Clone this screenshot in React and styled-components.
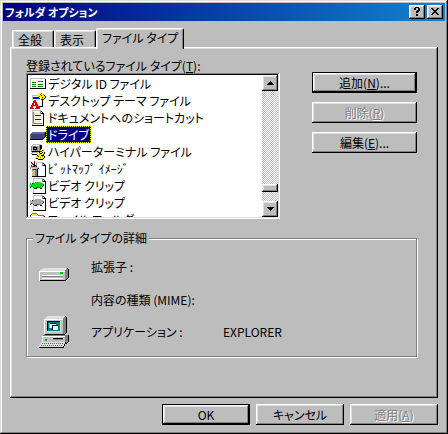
import React, { useState } from 'react';
import styled, { createGlobalStyle, css } from 'styled-components';

const palette = {
  k: '#000000',
  w: '#ffffff',
  g: '#808080',
  s: '#bdbdbd',
  r: '#d80000',
  n: '#008000',
  l: '#00d820',
  y: '#ffff00',
  o: '#808000',
  b: '#0000ff',
  d: '#000080',
  m: '#404078',
  v: '#686898',
  t: '#008080',
  f: '#f8e860',
};

const sprites = {
  card: [
    '................',
    '................',
    'ssssssssssssssss',
    'swwwwwwwwwwwwwwk',
    'swwwwwwwwwwwwwwk',
    'swwwwwwwnnnnnwwk',
    'swnnnnwwwwwwwwwk',
    'swwwwwwwwwwwwwwk',
    'swnnnnwwnnnnnwwk',
    'swwwwwwwwwwwwwwk',
    'swnnnnwwnnnnnwwk',
    'swwwwwwwwwwwwwwk',
    'kkkkkkkkkkkkkkkk',
    '................',
    '................',
    '................',
  ],
  theme: [
    '.........yyo....',
    '........yyryyo..',
    '..ssssssyyybyyk.',
    '..swwwwwyryyyyyk',
    '..sbbbbbbyyykyyk',
    '..sbbbbbbkyyyyk.',
    '..swwwwwwwwkkk..',
    '....rrwwwwwwk...',
    '...rrrwwwwwwk...',
    '...rrrrwwwwwk...',
    '..rr.rrwwwwwk...',
    '..rr.rrrwwwwk...',
    '.rrrrrrrwwwwk...',
    '.rr...rrrkkkk...',
    'rrr...rrrr......',
    'rrrr.rrrrr......',
  ],
  document: [
    '..sssssssss.....',
    '..swwwwwwwgk....',
    '..sgwwwwwwgwk...',
    '..sgyyyyywgkkk..',
    '..sgwwwwwwwwwk..',
    '..sgwbbbbbbwwk..',
    '..sgwwwwwwwwwk..',
    '..sgwyyyyyywwk..',
    '..sgwwwwwwwwwk..',
    '..sgwbbbbbbwwk..',
    '..sgwwwwwwwwwk..',
    '..sgwyyyyywwwk..',
    '..sgwwwwwwwwwk..',
    '..sgggggggggwk..',
    '..swwwwwwwwwwk..',
    '..kkkkkkkkkkkk..',
  ],
  disk: [
    '................',
    '................',
    '................',
    '................',
    '................',
    '..vvvvvvvvvvvvvk',
    '.vvvvvvvvvvvvvmk',
    'vmmmmmmmmmmmmmmk',
    'vmmmmmmmmmmmmmmk',
    'vmmmmmmmmmmmmmmk',
    'vmmmmmmmmmmmmmk.',
    'vmmmmmmmmmmmmk..',
    'kkkkkkkkkkkkk...',
    '................',
    '................',
    '................',
  ],
  terminal: [
    '...ssssssss.....',
    '..swwwwwwgkk....',
    '.gsgggggsgkk....',
    '.gskkkkgsgkk....',
    '.gsktlkgsgkk....',
    '.gskkkkgsgkyy...',
    '.gsgggggsgyyko..',
    '.gkkkkkkkkkoyy..',
    '..gsssssskyykyk.',
    '.gswwwwsyykkyyk.',
    '..kkkkkyyoyyyk..',
    '.......kyyykkk..',
    '......yykyyyoyk.',
    '.....yywyyoyyyk.',
    '......kkyyyyyk..',
    '........kkkkk...',
  ],
  paint: [
    '....r...........',
    '.k..r..ssssss...',
    '.gk.k.gwwwwwgk..',
    '..gkk.gwwwwwgwk.',
    '.r.gkkgwwwwwgkkk',
    '.rrkkgkwwwwwwwwk',
    'ssssssssswwwwwwk',
    'gwwssssgkwwwwwwk',
    '.wrrbbgkwwwwwwwk',
    '.wsssggkwwwwwwwk',
    '.wsssggkwwwwwwwk',
    '.wyssggkwwwwwwwk',
    '.wsssggkwwwwwwwk',
    '.wsssggkwwwwwwwk',
    '.wsssggkwwwwwwwk',
    '..kkkkkkkkkkkkkk',
  ],
  video: [
    '...ssssssssss...',
    '...swwwwwwwwgk..',
    '...swwwwwwwwgwk.',
    '...swwwwwwwwgkkk',
    '...swccccccwwwwk',
    'c.kccccccccccwwk',
    'cccccccccccccxwk',
    'ccccccccccccckwk',
    'cxccccccccccxwwk',
    'x..xccxxxxccwwwk',
    '...sxkkwwwkkwwwk',
    '...swwwwwwwwwwwk',
    '...swwwwwwwwwwwk',
    '...swwwwwwwwwwwk',
    '...swwwwwwwwwwwk',
    '...kkkkkkkkkkkkk',
  ],
  folder: [
    '................',
    '..ooooo.........',
    '.offfffo........',
    'offfffffoooooo..',
    'owwwwwwwwwwwwok.',
    'owffffffffffffk.',
    'owffffffffffffk.',
    'owffffffffffffk.',
    'owffffffffffffk.',
    'owffffffffffffk.',
    'owffffffffffffk.',
    'owffffffffffffk.',
    'ooooooooooooook.',
    '.kkkkkkkkkkkkkk.',
  ],
};

const Sprite = ({ name, colors = {} }) => (
  <SmallIcon viewBox="0 0 16 16" aria-hidden="true">
    {sprites[name].map((line, y) =>
      [...line].map((c, x) =>
        c === '.' ? null : (
          <rect key={`${x}-${y}`} x={x} y={y} width="1" height="1" fill={colors[c] || palette[c]} />
        )
      )
    )}
  </SmallIcon>
);

const green = { c: '#00d820', x: '#008000' };
const silver = { c: '#a8a8a8', x: '#606060' };

const fileTypes = [
  { id: 1, icon: 'card', label: 'デジタル ID ファイル' },
  { id: 2, icon: 'theme', label: 'デスクトップ テーマ ファイル' },
  { id: 3, icon: 'document', label: 'ドキュメントへのショートカット' },
  { id: 4, icon: 'disk', label: 'ドライブ' },
  { id: 5, icon: 'terminal', label: 'ハイパーターミナル ファイル' },
  { id: 6, icon: 'paint', label: 'ﾋﾞｯﾄﾏｯﾌﾟ ｲﾒｰｼﾞ' },
  { id: 7, icon: 'video', colors: green, label: 'ビデオ クリップ' },
  { id: 8, icon: 'video', colors: silver, label: 'ビデオ クリップ' },
  { id: 9, icon: 'folder', label: 'ファイル フォルダ' },
];

const DriveIcon = () => (
  <LargeIcon viewBox="0 0 32 32" aria-hidden="true">
    <path d="M4 9h25v1h1v8h-1v1h-1v1h-1v1h-1v1H0V12h1v-1h1v-1h2z" fill="#808080" />
    <path d="M4 9h24v1h-1v1h-1v1H1v-1h1v-1h2z" fill="#dfdfdf" />
    <path d="M0 12h26v10H0z" fill="#c0c0c0" />
    <path d="M0 12h26v1H1v9H0z" fill="#fff" />
    <path d="M3 16h21v1H3zM3 19h21v1H3z" fill="#fff" />
    <path d="M3 17h21v1H3z" fill="#808080" />
    <path d="M21 13h3v2h-3z" fill="#00c000" />
    <path d="M1 22h26v-1h1v-1h1v-1h1V10h-1V9h-1v1h1v9h-1v1h-1v1H1z" fill="#000" />
  </LargeIcon>
);

const ComputerIcon = () => (
  <LargeIcon $row={3} viewBox="0 0 32 32" aria-hidden="true">
    <path d="M8 0h19v1h1v16h-1v1h-1v1H5V3h1V2h1V1h1z" fill="#808080" />
    <path d="M8 0h18v1h-1v1h-1v1H6V2h1V1h1z" fill="#dfdfdf" />
    <path d="M5 3h19v15H5z" fill="#c0c0c0" />
    <path d="M5 3h19v1H6v14H5z" fill="#fff" />
    <path d="M8 5h14v11H8z" fill="#000" />
    <path d="M9 6h12v9H9z" fill="#008080" />
    <path d="M21 5h1v11H8v-1h13z" fill="#dfdfdf" />
    <path d="M10 7h6v5h-6z" fill="#00ffff" />
    <path d="M11 7h6v5h-6z" fill="#fff" />
    <path d="M11 7h6v1h-6z" fill="#000080" />
    <path d="M13 9h6v5h-6z" fill="#000080" />
    <path d="M14 10h5v4h-5z" fill="#fff" />
    <path d="M6 18h19v1h1v-1h1v-1h1V1h-1V0h-1v1h1v16h-1v1h-1v1H6z" fill="#000" />
    <path d="M4 19h25v1h1v6h-1v1h-1v1H3v-8h1z" fill="#808080" />
    <path d="M3 20h23v7H3z" fill="#c0c0c0" />
    <path d="M3 20h23v1H4v6H3z" fill="#fff" />
    <path d="M6 23h2v2H6z" fill="#00c000" />
    <path d="M14 22h10v1H14z" fill="#000" />
    <path d="M14 23h10v1H14z" fill="#808080" />
    <path d="M30 19v7h-1v1h-1v1H27v-1h1v-1h1v-7z" fill="#000" />
    <path d="M2 26h24v2h-1v2h-1v1H0v-2h1v-2h1z" fill="#dfdfdf" />
    <path d="M3 27.5h22M2 29.5h22" stroke="#606060" strokeWidth="1" strokeDasharray="1 1" />
    <path d="M0 31h24v-1h1v-2h1v-2h1v2h-1v2h-1v2H0z" fill="#000" />
  </LargeIcon>
);

const HelpGlyph = () => (
  <Glyph viewBox="0 0 8 9" aria-hidden="true">
    <path d="M2 0h4v1h1v3H6v1H5v1H3V4h1V3h1V1H3v2H1V1h1zM3 7h2v2H3z" />
  </Glyph>
);

const CloseGlyph = () => (
  <Glyph viewBox="0 0 8 9" aria-hidden="true">
    <path d="M0 1h2v1h1v1h2V2h1V1h2v1H7v1H6v1H5v1h1v1h1v1h1v1H6V7H5V6H3v1H2v1H0V7h1V6h1V5h1V4H2V3H1V2H0z" />
  </Glyph>
);

const tabs = ['全般', '表示', 'ファイル タイプ'];

const App = () => {
  const [tab, setTab] = useState(2);
  const [selected, setSelected] = useState(4);

  return (
    <Dialog>
      <GlobalStyle />
      <TitleBar>
        <Title>フォルダ オプション</Title>
        <CaptionButton aria-label="ヘルプ"><HelpGlyph /></CaptionButton>
        <CaptionButton aria-label="閉じる"><CloseGlyph /></CaptionButton>
      </TitleBar>
      <Body>
        <TabList role="tablist">
          {tabs.map((name, i) => (
            <Tab key={name} role="tab" aria-selected={tab === i} $active={tab === i} onClick={() => setTab(i)}>
              {name}
            </Tab>
          ))}
        </TabList>
        <Panel role="tabpanel">
          <Columns>
            <ListColumn>
              <ListLabel id="types-label">登録されているファイル タイプ(<u>T</u>):</ListLabel>
              <ListBox>
                <Items role="listbox" aria-labelledby="types-label" tabIndex={0}>
                  {fileTypes.map(({ id, icon, colors, label }) => (
                    <Item key={id} role="option" aria-selected={selected === id} onClick={() => setSelected(id)}>
                      <Sprite name={icon} colors={colors} />
                      <ItemText $selected={selected === id}>{label}</ItemText>
                    </Item>
                  ))}
                </Items>
                <ScrollBar>
                  <ScrollButton aria-label="上へ">
                    <Arrow viewBox="0 0 7 4"><path d="M3 0h1v1h1v1h1v1h1v1H0V3h1V2h1V1h1z" /></Arrow>
                  </ScrollButton>
                  <Track><Thumb /></Track>
                  <ScrollButton aria-label="下へ">
                    <Arrow viewBox="0 0 7 4"><path d="M0 0h7v1H6v1H5v1H4v1H3V3H2V2H1V1H0z" /></Arrow>
                  </ScrollButton>
                </ScrollBar>
              </ListBox>
            </ListColumn>
            <ButtonColumn>
              <Button $primary>追加(<u>N</u>)...</Button>
              <Button disabled>削除(<u>R</u>)</Button>
              <Button>編集(<u>E</u>)...</Button>
            </ButtonColumn>
          </Columns>
          <Group>
            <Legend>ファイル タイプの詳細</Legend>
            <Details>
              <DriveIcon />
              <Term>拡張子 :</Term>
              <Term $row={2}>内容の種類 (MIME):</Term>
              <ComputerIcon />
              <Term $row={3}>アプリケーション :</Term>
              <Value $row={3}>EXPLORER</Value>
            </Details>
          </Group>
        </Panel>
        <Footer>
          <Button $primary>OK</Button>
          <Button>キャンセル</Button>
          <Button disabled>適用(<u>A</u>)</Button>
        </Footer>
      </Body>
    </Dialog>
  );
};

const face = '#bdbdbd';

const GlobalStyle = createGlobalStyle`
  * {
    box-sizing: border-box;
  }

  body {
    margin: 0;
    background: ${face};
  }

  body, button {
    font-family: "Noto Sans CJK JP", sans-serif;
    font-size: 12px;
    line-height: 16px;
    font-feature-settings: "palt";
    color: #000;
  }

  u {
    text-underline-offset: 1px;
  }
`;

const raised = css`
  box-shadow: inset -1px -1px #000, inset 1px 1px #fff, inset -2px -2px #808080, inset 2px 2px #dfdfdf;
`;

const Dialog = styled.div`
  padding: 3px;
  background: ${face};
  box-shadow: inset -1px -1px #000, inset 1px 1px #dfdfdf, inset -2px -2px #808080, inset 2px 2px #fff;
`;

const TitleBar = styled.header`
  display: flex;
  align-items: center;
  height: 18px;
  padding: 0 2px;
  background: linear-gradient(to right, #000080, #1084d0);
`;

const Title = styled.h1`
  flex: 1;
  margin: 0;
  font-size: 11px;
  font-weight: 700;
  color: #fff;
`;

const CaptionButton = styled.button`
  display: flex;
  align-items: center;
  justify-content: center;
  width: 16px;
  height: 14px;
  margin-left: 2px;
  padding: 0 1px 1px 0;
  border: 0;
  background: ${face};
  ${raised}
`;

const Glyph = styled.svg`
  width: 8px;
  height: 9px;
  shape-rendering: crispEdges;
`;

const Body = styled.main`
  padding: 7px 7px 6px;
`;

const TabList = styled.div`
  display: flex;
  align-items: flex-end;
  padding-left: 2px;
`;

const Tab = styled.button`
  min-width: 42px;
  height: 17px;
  padding: 0 5px;
  border: 1px solid #fff;
  border-right-color: #000;
  border-bottom: 0;
  border-radius: 2px 2px 0 0;
  background: ${face};
  box-shadow: inset -1px 0 #808080, inset 1px 1px #dfdfdf;
  line-height: 15px;
  text-align: left;

  ${({ $active }) => $active && css`
    position: relative;
    height: 21px;
    margin-bottom: -2px;
    line-height: 16px;
    padding-bottom: 3px;
  `}
`;

const Panel = styled.section`
  padding: 11px 21px 41px 16px;
  ${raised}
`;

const Columns = styled.div`
  display: flex;
  gap: 32px;
`;

const ListColumn = styled.div`
  flex: 1;
  min-width: 0;
`;

const ListLabel = styled.div`
  line-height: 15px;
`;

const ListBox = styled.div`
  display: flex;
  height: 146px;
  padding: 2px;
  background: #fff;
  box-shadow: inset -1px -1px #fff, inset 1px 1px #808080, inset -2px -2px #dfdfdf, inset 2px 2px #000;
`;

const Items = styled.ul`
  flex: 1;
  margin: 0;
  padding: 0 0 0 2px;
  overflow: hidden;
  list-style: none;
  outline: none;
`;

const Item = styled.li`
  display: flex;
  align-items: center;
  height: 17px;
  white-space: nowrap;
`;

const SmallIcon = styled.svg`
  width: 16px;
  height: 16px;
  shape-rendering: crispEdges;
`;

const ItemText = styled.span`
  padding: 0 2px;
  line-height: 17px;

  ${({ $selected }) => $selected && css`
    background: #000080;
    color: #fff;
    outline: 1px dotted #ffff00;
    outline-offset: -1px;
  `}
`;

const ScrollBar = styled.div`
  display: flex;
  flex-direction: column;
  width: 16px;
`;

const ScrollButton = styled.button`
  display: flex;
  align-items: center;
  justify-content: center;
  height: 16px;
  padding: 0;
  border: 0;
  background: ${face};
  ${raised}
`;

const Arrow = styled.svg`
  width: 7px;
  height: 4px;
  shape-rendering: crispEdges;
`;

const Track = styled.div`
  display: flex;
  flex: 1;
  flex-direction: column;
  justify-content: flex-end;
  padding-bottom: 9px;
  background: repeating-conic-gradient(#fff 0 25%, ${face} 0 50%) 0 0 / 2px 2px;
`;

const Thumb = styled.div`
  height: 8px;
  background: ${face};
  ${raised}
`;

const ButtonColumn = styled.div`
  display: flex;
  flex-direction: column;
  gap: 9px;
  width: 105px;
  padding-top: 14px;
`;

const Button = styled.button`
  height: 21px;
  padding: 0;
  border: 0;
  background: ${face};
  line-height: 19px;
  ${raised}

  ${({ $primary }) => $primary && css`
    box-shadow: inset 0 0 0 1px #000, inset -2px -2px #000, inset 2px 2px #fff, inset -3px -3px #808080, inset 3px 3px #dfdfdf;
  `}

  &:disabled {
    color: #808080;
    text-shadow: 1px 1px #fff;
  }
`;

const Group = styled.fieldset`
  min-width: 0;
  margin: 11px 0 0;
  padding: 13px 12px 8px;
  border: 1px solid #808080;
  box-shadow: inset 1px 1px #fff, 1px 1px #fff;
`;

const Legend = styled.legend`
  margin-left: -6px;
  padding: 0 2px;
  background: ${face};
`;

const Details = styled.div`
  display: grid;
  grid-template-columns: 52px 132px 1fr;
  grid-template-rows: 33px 24px 32px;
`;

const LargeIcon = styled.svg`
  grid-column: 1;
  grid-row: ${({ $row = 1 }) => $row};
  width: 32px;
  height: 32px;
  shape-rendering: crispEdges;
`;

const Term = styled.span`
  grid-column: 2;
  grid-row: ${({ $row = 1 }) => $row};
  align-self: ${({ $row }) => ($row === 3 ? 'center' : 'start')};
`;

const Value = styled.output`
  grid-column: 3;
  grid-row: ${({ $row }) => $row};
  align-self: center;
`;

const Footer = styled.footer`
  display: flex;
  justify-content: flex-end;
  gap: 6px;
  padding-top: 6px;

  ${Button} {
    width: 88px;
  }
`;

export default App;
